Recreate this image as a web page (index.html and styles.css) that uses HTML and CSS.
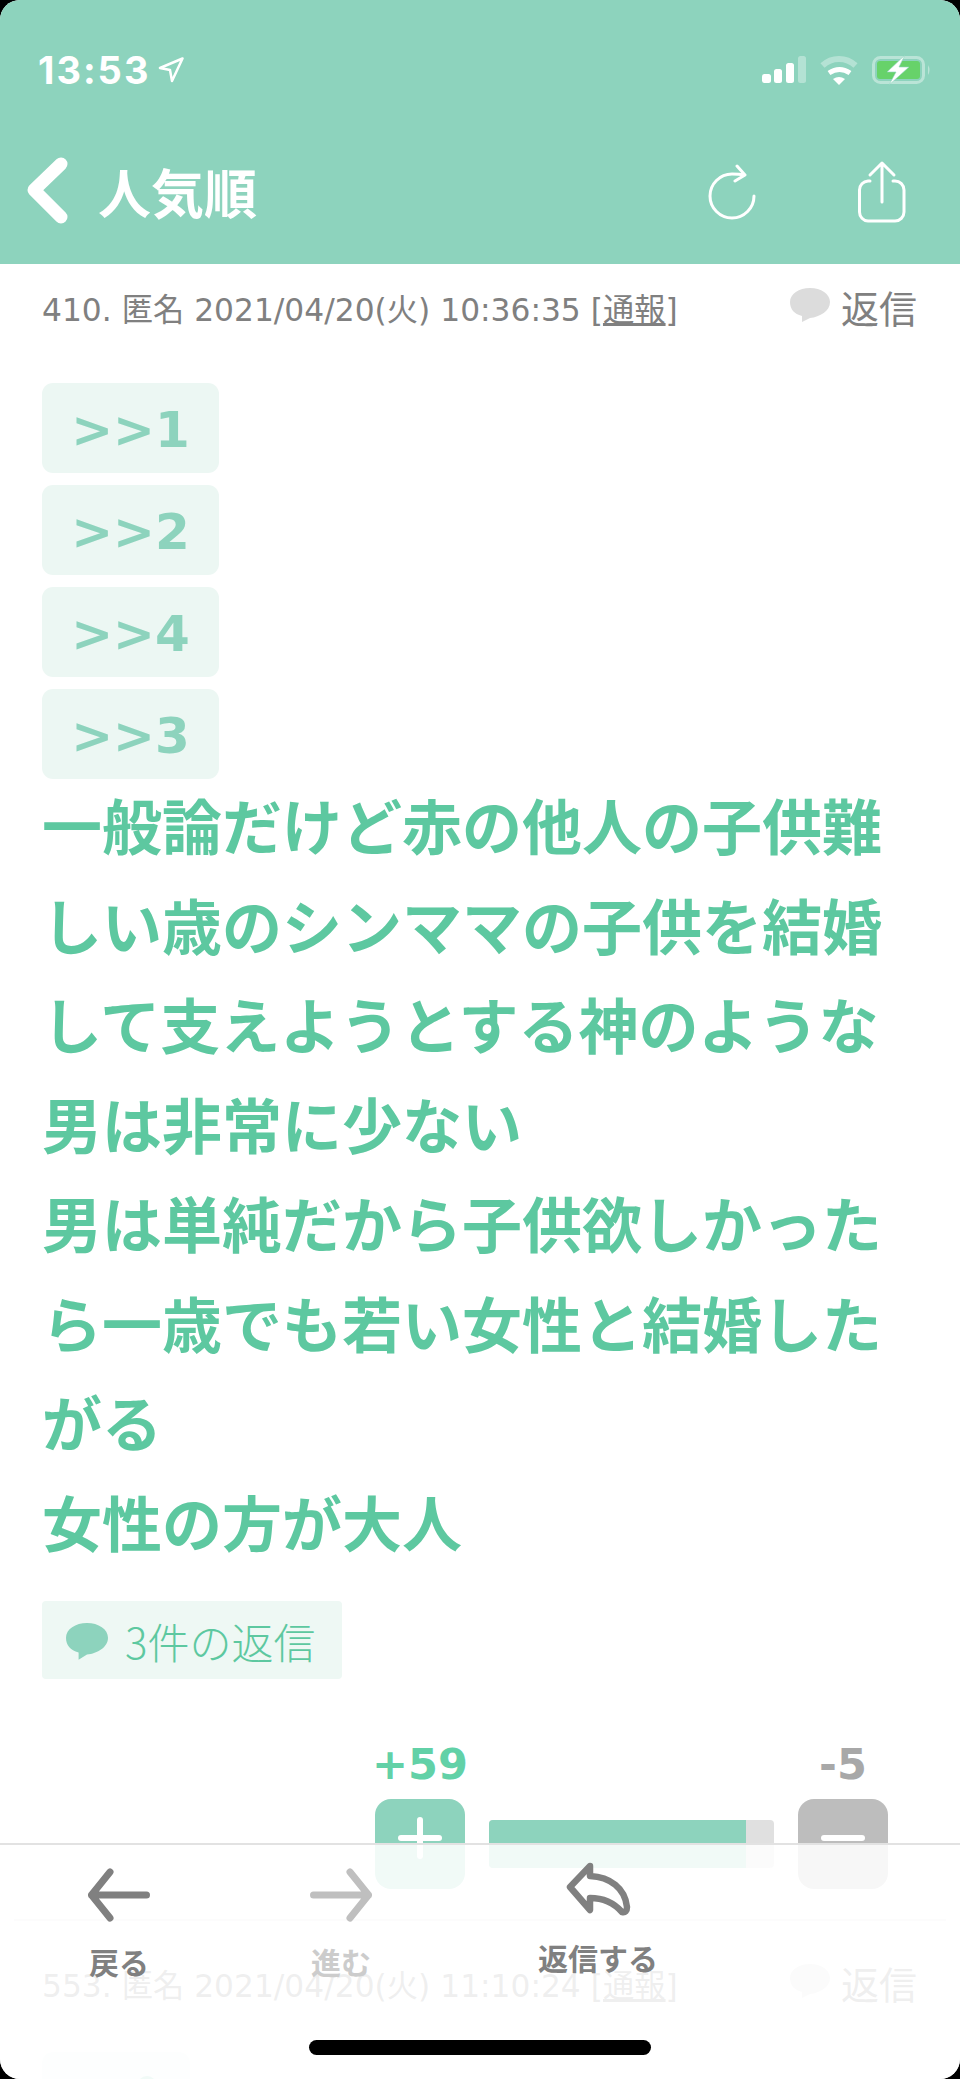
FILE: index.html
```html
<!DOCTYPE html>
<html lang="ja">
<head>
<meta charset="utf-8">
<title>人気順</title>
<link rel="stylesheet" href="styles.css">
</head>
<body>
<div class="app">
  <header class="header">
    <div class="status">
      <span class="time">13:53</span>
      <svg class="loc" viewBox="0 0 26 26"><path d="M24.5 1.5 2 11l10 2 2 11z"/></svg>
      <span class="spacer"></span>
      <svg class="signal" viewBox="0 0 44 28"><rect x="0" y="18" width="9" height="9" rx="2.5"/><rect x="12" y="13" width="8" height="14" rx="2.5"/><rect x="24" y="7" width="8" height="20" rx="2.5"/><rect class="faded" x="36" y="0" width="8" height="27" rx="2.5"/></svg>
      <svg class="wifi" viewBox="0 0 38 30"><path class="w1" d="M2.5 10.5a24 24 0 0 1 33 0"/><path class="w2" d="M9 18q10.500-7 21 0"/><path class="w3" d="M13 24q6-4 12 0l-6 6z"/></svg>
      <svg class="batt" viewBox="0 0 60 30"><rect class="b-out" x="1.500" y="2.500" width="50" height="25" rx="7"/><rect class="b-fill" x="5" y="6" width="43" height="18" rx="3"/><path class="b-nub" d="M56 10q3 5 0 10z"/><path class="b-bolt" d="M33 0 15 17h9l-7 13 20-18h-10z"/></svg>
    </div>
    <nav class="nav">
      <svg class="chev" viewBox="0 0 48 70"><path d="M37 7 10 33l27 27"/></svg>
      <h1 class="title">人気順</h1>
      <span class="spacer"></span>
      <svg class="refresh" viewBox="0 0 52 60"><path d="M48 32a22 22 0 1 1-22-22c4 0 8 0 11 1"/><path d="M31 2l8 9-10 6"/></svg>
      <svg class="share" viewBox="0 0 50 64"><path d="M14 21H12A9 9 0 0 0 3.500 30v22a9 9 0 0 0 8.500 9h27a9 9 0 0 0 9-9V30a9 9 0 0 0-9-9h-2"/><path d="M26 42V3M14 15 26 3l12 12"/></svg>
    </nav>
  </header>

  <main>
    <article class="post">
      <div class="meta">
        <span class="meta-text">410. 匿名 2021/04/20(火) 10:36:35 [<u>通報</u>]</span>
        <span class="spacer"></span>
        <svg class="bubble" viewBox="0 0 40 36"><path d="M20 0c11 0 20 6 20 14 0 9-10 15-20 16l-8 4 0-6C4 26 0 21 0 14 0 6 9 0 20 0z"/></svg>
        <span class="reply-link">返信</span>
      </div>
      <div class="refs">
        <a class="ref">&gt;&gt;1</a>
        <a class="ref">&gt;&gt;2</a>
        <a class="ref">&gt;&gt;4</a>
        <a class="ref">&gt;&gt;3</a>
      </div>
      <p class="body">一般論だけど赤の他人の子供難しい歳のシンママの子供を結婚して支えようとする神のような男は非常に少ない<br>男は単純だから子供欲しかったら一歳でも若い女性と結婚したがる<br>女性の方が大人</p>
      <a class="replies">
        <svg class="bubble-g" viewBox="0 0 40 36"><path d="M20 0c11 0 20 6 20 14 0 9-10 15-20 16l-8 5 0-7C4 26 0 21 0 14 0 6 9 0 20 0z"/></svg>
        3件の返信
      </a>
      <div class="votes">
        <div class="vote">
          <span class="count count-plus">+59</span>
          <span class="vbtn vbtn-plus"><i class="bar-h"></i><i class="bar-v"></i></span>
        </div>
        <div class="meter"><div class="meter-fill"></div></div>
        <div class="vote">
          <span class="count count-minus">-5</span>
          <span class="vbtn vbtn-minus"><i class="bar-h"></i></span>
        </div>
      </div>
    </article>
    <div class="divider"></div>
    <article class="post post-next">
      <div class="meta">
        <span class="meta-text">553. 匿名 2021/04/20(火) 11:10:24 [<u>通報</u>]</span>
        <span class="spacer"></span>
        <svg class="bubble" viewBox="0 0 40 36"><path d="M20 0c11 0 20 6 20 14 0 9-10 15-20 16l-8 4 0-6C4 26 0 21 0 14 0 6 9 0 20 0z"/></svg>
        <span class="reply-link">返信</span>
      </div>
      <div class="ref ref-next"><span class="ref-dot"></span></div>
    </article>
  </main>

  <footer class="tabbar">
    <div class="tab tab-back">
      <svg class="arrow" viewBox="0 0 62 58"><path d="M58.500 29h-55M22 6 3.500 29 22 52"/></svg>
      <span class="tab-label">戻る</span>
    </div>
    <div class="tab tab-fwd">
      <svg class="arrow" viewBox="0 0 62 58"><path d="M3.500 29h55M40 6l18.500 23L40 52"/></svg>
      <span class="tab-label">進む</span>
    </div>
    <div class="tab tab-reply">
      <svg class="reply-ico" viewBox="0 0 72 60"><path d="M28 8 8 29l20 23V40c14 0 24 5 32 14q5 1 5-5C63 30 48 19 28 18z"/></svg>
      <span class="tab-label">返信する</span>
    </div>
  </footer>
  <div class="home"></div>
</div>
</body>
</html>
```

FILE: styles.css
```css
* { box-sizing: border-box; }
html, body { margin: 0; padding: 0; background: #000; }
body { width: 960px; height: 2079px; overflow: hidden; font-family: "Noto Sans CJK JP", "Noto Sans", sans-serif; }
svg { display: block; flex: none; }
.spacer { flex: 1; }

.app { position: relative; width: 960px; height: 2079px; overflow: hidden; background: #fff; border-radius: 20px; }

/* header */
.header { height: 264px; background: #8dd3bd; padding-top: 55px; color: #fff; }
.status { display: flex; align-items: center; height: 30px; padding: 0 28px 0 38px; }
.time { font: 700 38px/30px Inter, "Liberation Sans", sans-serif; width: 120px; letter-spacing: 2px; }
.loc { width: 26px; height: 26px; fill: none; stroke: #fff; stroke-width: 2.5; stroke-linejoin: round; }
.signal { width: 44px; height: 28px; fill: #fff; margin-right: 14px; }
.signal .faded { opacity: .35; }
.wifi { width: 38px; height: 30px; margin-right: 14px; }
.w1 { fill: none; stroke: #fff; stroke-opacity: .35; stroke-width: 6; }
.w2 { fill: none; stroke: #fff; stroke-width: 5; }
.w3 { fill: #fff; }
.batt { width: 60px; height: 30px; }
.b-out { fill: none; stroke: #fff; stroke-opacity: .4; stroke-width: 3; }
.b-fill { fill: #67d26a; }
.b-nub { fill: #fff; fill-opacity: .4; }
.b-bolt { fill: #fff; stroke: #8dd3bd; stroke-width: .6; }

.nav { display: flex; align-items: center; height: 108px; margin-top: 53px; padding-left: 24px; padding-right: 54px; }
.chev { width: 48px; height: 70px; fill: none; stroke: #fff; stroke-width: 13; stroke-linecap: round; stroke-linejoin: round; }
.title { margin: -2px 0 0 26px; font-size: 53px; line-height: 70px; font-weight: 700; }
.refresh { width: 52px; height: 60px; fill: none; stroke: #fff; stroke-width: 3; stroke-linecap: round; stroke-linejoin: round; margin-right: 98px; margin-top: 4px; }
.share { width: 50px; height: 64px; fill: none; stroke: #fff; stroke-width: 3; stroke-linecap: round; stroke-linejoin: round; }

/* post */
.post { padding: 0 42px; }
.meta { display: flex; align-items: center; height: 88px; padding-right: 1px; color: #808080; }
.meta-text { font-family: "DejaVu Sans", "Noto Sans CJK JP", sans-serif; font-size: 31.3px; line-height: 40px; white-space: nowrap; margin-top: 3px; }
.bubble { width: 40px; height: 36px; fill: #dcdcdc; margin-right: 11px; margin-top: -4px; }
.reply-link { font-size: 38px; line-height: 50px; margin-top: -2px; }

.refs { display: flex; flex-direction: column; gap: 12px; margin-top: 31px; align-items: flex-start; }
.ref { display: block; width: 177px; height: 90px; padding-top: 2px; background: #ecf7f3; border-radius: 11px; color: #8dd3bd; font: 700 50px/90px "DejaVu Sans", sans-serif; text-align: center; }

.body { margin: -5px 0 0; width: 876px; font-size: 60px; line-height: 99.500px; font-weight: 700; color: #5dc8a0; }

.replies { display: flex; align-items: center; width: 300px; height: 78px; margin-top: 31px; padding-left: 24px; background: #eef8f4; border-radius: 4px; color: #5dc8a0; font-size: 42px; font-weight: 300; }
.bubble-g { width: 42px; height: 38px; fill: #8dd3bd; margin-right: 17px; margin-top: 4px; }

.votes { display: flex; align-items: flex-end; margin-top: 57px; margin-left: 333px; height: 153px; }
.vote { display: flex; flex-direction: column; align-items: center; width: 90px; }
.count { font-family: "DejaVu Sans", sans-serif; font-size: 43px; line-height: 60px; font-weight: 700; margin-bottom: 5px; white-space: nowrap; }
.count-plus { color: #62d1a7; }
.count-minus { color: #a8a8a8; }
.vbtn { position: relative; display: block; width: 90px; height: 90px; border-radius: 16px; }
.vbtn-plus { background: #8dd3bd; }
.vbtn-minus { background: #bdbdbd; }
.bar-h { position: absolute; left: 23px; right: 23px; top: 36px; height: 6px; background: #fff; border-radius: 3px; }
.bar-v { position: absolute; left: 42px; top: 18px; width: 6px; height: 42px; background: #fff; border-radius: 3px; }
.meter { width: 285px; height: 48px; margin: 0 24px 21px; background: #e0e0e0; border-radius: 4px; overflow: hidden; }
.meter-fill { width: 257px; height: 100%; background: #8dd3bd; }

.divider { height: 2px; margin: 30px 14px 0; background: #e2e2e2; }
.post-next { padding-top: 19px; }
.ref-next { width: 148px; margin-top: 24px; padding: 24px 0 0 95px; height: 60px; }
.ref-dot { display: block; width: 20px; height: 20px; border-radius: 50%; background: #8dd3bd; }

/* tab bar */
.tabbar { position: absolute; left: 0; right: 0; top: 1843px; bottom: 0; display: flex; padding-left: 88px; background: rgba(255, 255, 255, .875); border-top: 2px solid #e2e2e2; }
.tab { display: flex; flex-direction: column; align-items: center; }
.arrow { width: 62px; height: 58px; margin-top: 21px; fill: none; stroke-width: 7; stroke-linecap: round; stroke-linejoin: round; }
.tab-label { font-size: 30px; line-height: 40px; font-weight: 700; margin-top: 17px; white-space: nowrap; }
.tab-back { color: #808080; stroke: #808080; }
.tab-fwd { color: #cccccc; stroke: #bfbfbf; margin-left: 160px; }
.tab-reply { color: #808080; margin-left: 166px; }
.reply-ico { width: 72px; height: 60px; margin-top: 13px; fill: none; stroke: #808080; stroke-width: 6.500; stroke-linejoin: round; }
.tab-reply .tab-label { margin-top: 19px; }

.home { position: absolute; left: 309px; top: 2040px; width: 342px; height: 15px; border-radius: 8px; background: #000; }
```
